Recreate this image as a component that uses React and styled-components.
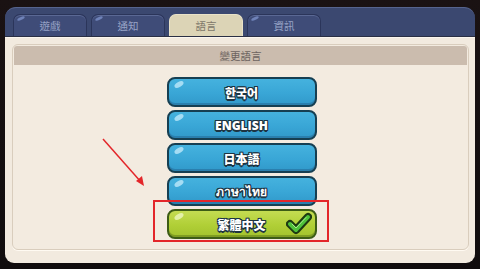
import styled, { createGlobalStyle } from 'styled-components'

const GlobalStyle = createGlobalStyle`
  html, body {
    margin: 0;
    padding: 0;
    background: #140f10;
  }
  body {
    width: 480px;
    height: 269px;
    overflow: hidden;
    font-family: "Noto Sans CJK TC", "Noto Sans", sans-serif;
  }
`

const Screen = styled.div`
  position: relative;
  width: 480px;
  height: 269px;
  padding: 7px 5px 0 5px;
  box-sizing: border-box;
  background: linear-gradient(#1a1213, #100c0d);
`

const Window = styled.div`
  width: 470px;
  display: flex;
  flex-direction: column;
`

const Header = styled.div`
  height: 29px;
  box-sizing: border-box;
  background: #3b4870;
  border-radius: 11px 11px 0 0;
  border-top: 1px solid #56648e;
  padding: 0 0 0 8px;
  display: flex;
  align-items: flex-end;
  gap: 4px;
`

const Tab = styled.div`
  width: 74px;
  height: 22px;
  box-sizing: border-box;
  border-radius: 7px 7px 0 0;
  display: flex;
  align-items: center;
  justify-content: center;
  font-size: 10.5px;
  position: relative;
  background: ${(p) => (p.$active ? '#dcd4b6' : '#3f4c78')};
  color: ${(p) => (p.$active ? '#80786a' : '#97a3c6')};
  border: 1px solid ${(p) => (p.$active ? '#e9e2c8' : '#2b355a')};
  border-bottom: none;
  box-shadow: ${(p) => (p.$active ? 'none' : 'inset 0 1px 0 #5a6894')};

  &::before {
    content: '';
    display: ${(p) => (p.$active ? 'none' : 'block')};
    position: absolute;
    left: 3px;
    top: 2px;
    width: 8px;
    height: 3px;
    border-radius: 50%;
    background: #6f82b8;
    transform: rotate(-25deg);
  }
`

const Body = styled.div`
  background: #f2eadf;
  border-radius: 0 0 9px 9px;
  border-top: 1px solid #2a2f44;
  padding: 7px 6px 13px 7px;
  box-shadow: inset 0 1px 0 #fbf6ee;
`

const Inner = styled.div`
  border: 1px solid #d9cdbd;
  border-radius: 6px;
  padding: 1px 1px 10px 1px;
  background: #f3ebe0;
  box-shadow: 0 1px 0 #fffaf2;
`

const Title = styled.div`
  height: 19px;
  background: #cbbcae;
  display: flex;
  align-items: center;
  justify-content: center;
  font-size: 10.5px;
  color: #6d6460;
  border-radius: 3px 3px 0 0;
`

const List = styled.div`
  margin-top: 12px;
  display: flex;
  flex-direction: column;
  align-items: center;
  gap: 3px;
  padding-left: 2px;
`

const outline = '#1d3442'

const LangButton = styled.div`
  position: relative;
  width: 150px;
  height: 30px;
  box-sizing: border-box;
  border-radius: 8px;
  border: 2px solid ${(p) => (p.$green ? '#3d5c16' : '#163f52')};
  background: ${(p) =>
    p.$green
      ? 'linear-gradient(#c4dc52, #b0cf36 55%, #a3c22e)'
      : 'linear-gradient(#45b2de, #39a6d6 55%, #3199ca)'};
  box-shadow: inset 0 -2px 0 ${(p) => (p.$green ? '#7f9c22' : '#2a7fae')};
  display: flex;
  align-items: center;
  justify-content: center;
  color: #ffffff;
  font-weight: 900;
  font-size: 12px;
  font-family: ${(p) =>
    p.$latin
      ? '"Open Sans", "Noto Sans", sans-serif'
      : '"Noto Sans CJK TC", "Noto Sans CJK KR", "Noto Sans", sans-serif'};
  text-shadow:
    1px 0 0 ${outline},
    -1px 0 0 ${outline},
    0 1px 0 ${outline},
    0 -1px 0 ${outline},
    1px 1px 0 ${outline},
    -1px -1px 0 ${outline},
    1px -1px 0 ${outline},
    -1px 1px 0 ${outline},
    0 2px 0 ${outline};

  &::before {
    content: '';
    position: absolute;
    left: 5px;
    top: 3px;
    width: 10px;
    height: 5px;
    border-radius: 50%;
    background: ${(p) =>
      p.$green ? 'rgba(240, 250, 200, 0.75)' : 'rgba(190, 232, 250, 0.8)'};
    transform: rotate(-30deg);
  }
`

const Check = styled.svg`
  position: absolute;
  right: 3px;
  top: 1px;
`

const Highlight = styled.div`
  position: absolute;
  left: 153px;
  top: 200px;
  width: 176px;
  height: 42px;
  box-sizing: border-box;
  border: 2px solid #e3262a;
`

const Arrow = styled.svg`
  position: absolute;
  left: 98px;
  top: 134px;
`

const tabs = ['遊戲', '通知', '語言', '資訊']
const langs = [
  { label: '한국어' },
  { label: 'ENGLISH', latin: true },
  { label: '日本語' },
  { label: 'ภาษาไทย', latin: true },
]

export default function App() {
  return (
    <Screen>
      <GlobalStyle />
      <Window>
        <Header>
          {tabs.map((t) => (
            <Tab key={t} $active={t === '語言'}>
              {t}
            </Tab>
          ))}
        </Header>
        <Body>
          <Inner>
            <Title>變更語言</Title>
            <List>
              {langs.map((l) => (
                <LangButton key={l.label} $latin={l.latin}>
                  {l.label}
                </LangButton>
              ))}
              <LangButton $green>
                繁體中文
                <Check width="26" height="24" viewBox="0 0 26 24">
                  <path
                    d="M4 12 L10 18 L22 5"
                    fill="none"
                    stroke="#1d3a12"
                    strokeWidth="8"
                    strokeLinecap="round"
                    strokeLinejoin="round"
                  />
                  <path
                    d="M4 12 L10 18 L22 5"
                    fill="none"
                    stroke="#4fc23a"
                    strokeWidth="4"
                    strokeLinecap="round"
                    strokeLinejoin="round"
                  />
                  <path
                    d="M6 12 L10 16 L20 5.5"
                    fill="none"
                    stroke="#a8ec8c"
                    strokeWidth="1"
                    strokeLinecap="round"
                  />
                </Check>
              </LangButton>
            </List>
          </Inner>
        </Body>
      </Window>
      <Highlight />
      <Arrow width="50" height="55" viewBox="0 0 50 55">
        <line x1="5" y1="5" x2="43" y2="48" stroke="#e3262a" strokeWidth="1.5" />
        <path d="M46 52 L38 47 L44 42 Z" fill="#e3262a" />
      </Arrow>
    </Screen>
  )
}
